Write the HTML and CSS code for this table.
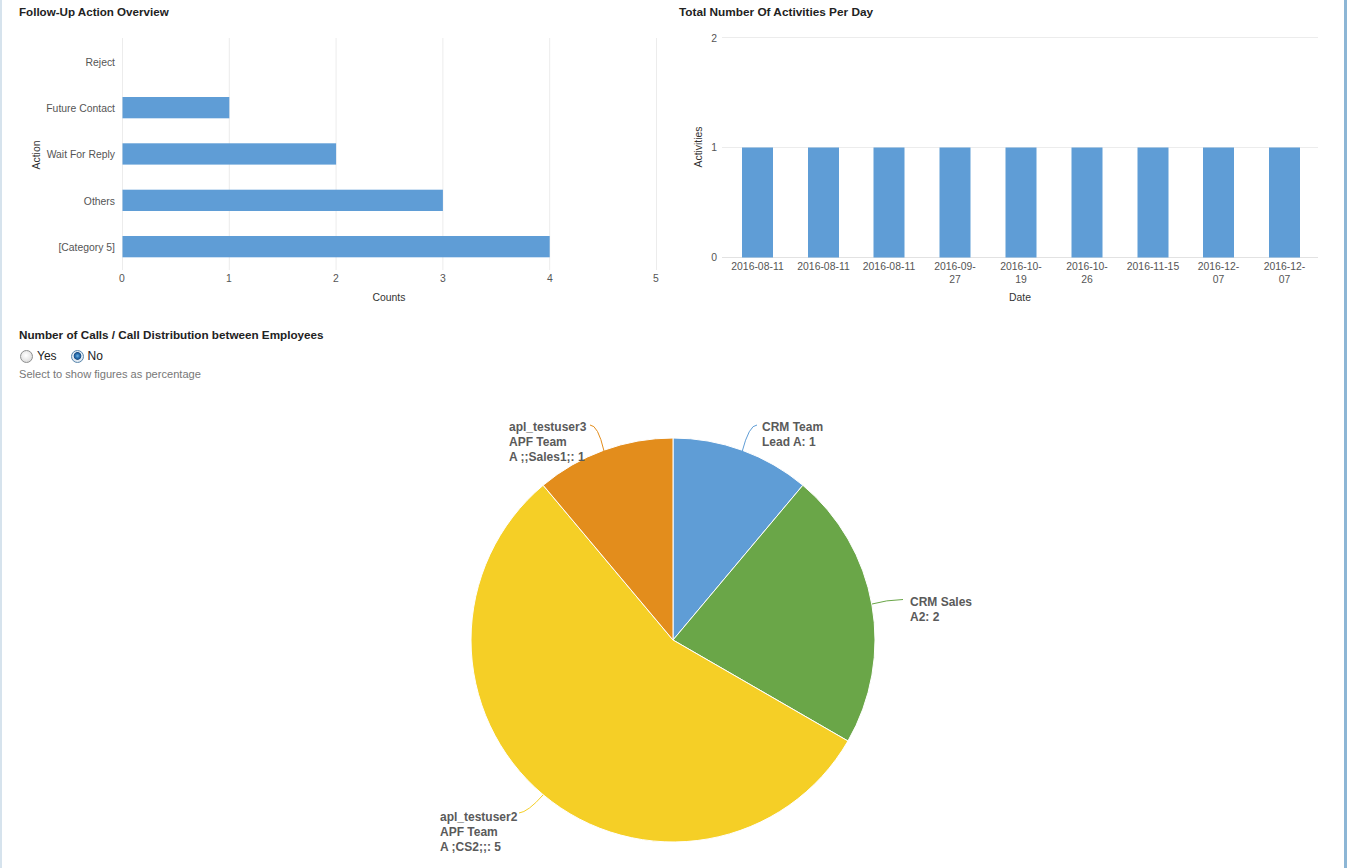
FILE: index.html
```html
<!DOCTYPE html>
<html lang="en">
<head>
<meta charset="utf-8">
<title>Follow-Up Dashboard</title>
<link rel="stylesheet" href="styles.css">
</head>
<body>
<div class="frame">
  <div class="top-row">
    <section class="panel panel-left">
      <h2 class="panel-title">Follow-Up Action Overview</h2>
      <svg class="chart" width="641" height="301" viewBox="0 0 641 301">
        <g transform="translate(-19,-19)">
          <g class="grid">
            <line x1="122.5" y1="38" x2="122.5" y2="270"/>
            <line x1="229.3" y1="38" x2="229.3" y2="270"/>
            <line x1="336.1" y1="38" x2="336.1" y2="270"/>
            <line x1="442.9" y1="38" x2="442.9" y2="270"/>
            <line x1="549.7" y1="38" x2="549.7" y2="270"/>
            <line x1="656.5" y1="38" x2="656.5" y2="270"/>
          </g>
          <g class="bars">
            <rect x="122.5" y="97" width="106.8" height="21.3"/>
            <rect x="122.5" y="143.3" width="213.6" height="21.3"/>
            <rect x="122.5" y="189.7" width="320.4" height="21.3"/>
            <rect x="122.5" y="236" width="427.2" height="21.3"/>
          </g>
          <g class="tick cat" text-anchor="end">
            <text x="115" y="66">Reject</text>
            <text x="115" y="112">Future Contact</text>
            <text x="115" y="158">Wait For Reply</text>
            <text x="115" y="205">Others</text>
            <text x="115" y="251">[Category 5]</text>
          </g>
          <g class="tick" text-anchor="middle">
            <text x="122" y="282">0</text>
            <text x="229" y="282">1</text>
            <text x="336" y="282">2</text>
            <text x="443" y="282">3</text>
            <text x="550" y="282">4</text>
            <text x="656" y="282">5</text>
          </g>
          <text class="axis-title" x="389" y="301" text-anchor="middle">Counts</text>
          <text class="axis-title" transform="translate(40,155) rotate(-90)" text-anchor="middle">Action</text>
        </g>
      </svg>
    </section>
    <section class="panel panel-right">
      <h2 class="panel-title panel-title-wide">Total Number Of Activities Per Day</h2>
      <svg class="chart" width="646" height="301" viewBox="0 0 646 301">
        <g transform="translate(-679,-19)">
          <g class="grid">
            <line x1="722" y1="37.5" x2="1318" y2="37.5"/>
            <line x1="722" y1="147.5" x2="1318" y2="147.5"/>
            <line class="base" x1="722" y1="257.5" x2="1318" y2="257.5"/>
          </g>
          <g class="bars">
            <rect x="742" y="147.5" width="31" height="110"/>
            <rect x="808" y="147.5" width="31" height="110"/>
            <rect x="873.5" y="147.5" width="31" height="110"/>
            <rect x="939.5" y="147.5" width="31" height="110"/>
            <rect x="1005.5" y="147.5" width="31" height="110"/>
            <rect x="1071.5" y="147.5" width="31" height="110"/>
            <rect x="1137.5" y="147.5" width="31" height="110"/>
            <rect x="1203" y="147.5" width="31" height="110"/>
            <rect x="1269" y="147.5" width="31" height="110"/>
          </g>
          <g class="tick" text-anchor="end">
            <text x="717" y="42">2</text>
            <text x="717" y="151">1</text>
            <text x="717" y="261">0</text>
          </g>
          <g class="tick" text-anchor="middle">
            <text x="757.5" y="270">2016-08-11</text>
            <text x="823.5" y="270">2016-08-11</text>
            <text x="889" y="270">2016-08-11</text>
            <text x="955" y="270">2016-09-</text>
            <text x="955" y="283">27</text>
            <text x="1021" y="270">2016-10-</text>
            <text x="1021" y="283">19</text>
            <text x="1087" y="270">2016-10-</text>
            <text x="1087" y="283">26</text>
            <text x="1153" y="270">2016-11-15</text>
            <text x="1218.5" y="270">2016-12-</text>
            <text x="1218.5" y="283">07</text>
            <text x="1284.5" y="270">2016-12-</text>
            <text x="1284.5" y="283">07</text>
          </g>
          <text class="axis-title" x="1020" y="301" text-anchor="middle">Date</text>
          <text class="axis-title" transform="translate(702,147) rotate(-90)" text-anchor="middle">Activities</text>
        </g>
      </svg>
    </section>
  </div>

  <section class="calls">
    <div class="calls-head">
      <h2 class="calls-title">Number of Calls / Call Distribution between Employees</h2>
      <div class="radio-row">
        <label class="radio-opt"><input type="radio" name="pct" class="radio"><span>Yes</span></label>
        <label class="radio-opt"><input type="radio" name="pct" class="radio" checked><span>No</span></label>
      </div>
      <p class="hint">Select to show figures as percentage</p>
    </div>
    <svg class="pie" width="1342" height="487" viewBox="0 0 1342 487">
      <g transform="translate(-2,-381)">
        <g class="slices">
          <path class="s-blue" d="M673,640 L673,438 A202,202 0 0 1 802.85,485.26 Z"/>
          <path class="s-green" d="M673,640 L802.85,485.26 A202,202 0 0 1 847.94,741 Z"/>
          <path class="s-yellow" d="M673,640 L847.94,741 A202,202 0 1 1 543.15,485.26 Z"/>
          <path class="s-orange" d="M673,640 L543.15,485.26 A202,202 0 0 1 673,438 Z"/>
        </g>
        <g class="leaders">
          <path class="l-blue" d="M757,425 Q749,425 742,452"/>
          <path class="l-green" d="M872,604 Q886,600 903,599.5"/>
          <path class="l-yellow" d="M519,813 Q528,812 543,795"/>
          <path class="l-orange" d="M590,425 Q598,425 604,451"/>
        </g>
        <g class="pie-label">
          <text x="762" y="431">CRM Team</text>
          <text x="762" y="446">Lead A: 1</text>
          <text x="910" y="606">CRM Sales</text>
          <text x="910" y="621">A2: 2</text>
          <text x="509" y="431">apl_testuser3</text>
          <text x="509" y="446">APF Team</text>
          <text x="509" y="461">A ;;Sales1;: 1</text>
          <text x="440" y="821">apl_testuser2</text>
          <text x="440" y="836">APF Team</text>
          <text x="440" y="851">A ;CS2;;: 5</text>
        </g>
      </g>
    </svg>
  </section>
</div>
</body>
</html>
```

FILE: styles.css
```css
html, body {
  margin: 0;
  padding: 0;
  background: #ffffff;
}

body {
  font-family: "Liberation Sans", Arial, sans-serif;
  color: #333;
}

.frame {
  box-sizing: border-box;
  width: 1347px;
  height: 868px;
  overflow: hidden;
  border-left: 2px solid #d6e3ed;
  border-right: 3px solid #8db6d5;
}

.top-row {
  display: grid;
  grid-template-columns: 658px 1fr;
  height: 320px;
}

.panel-left {
  padding-left: 17px;
}

.panel-right {
  padding-left: 19px;
}

.panel-title {
  margin: 5px 0 0;
  font-size: 11.6px;
  line-height: 14px;
  font-weight: bold;
  color: #222;
}

.panel-title-wide {
  font-size: 11.8px;
}

.chart {
  display: block;
  overflow: visible;
}

.grid line {
  stroke: #ececec;
  stroke-width: 1;
}

.grid line.base {
  stroke: #e2e2e2;
}

.bars rect {
  fill: #5f9dd6;
}

.tick text {
  font-family: "Liberation Sans", Arial, sans-serif;
  font-size: 10.4px;
  fill: #555;
}

.axis-title {
  font-family: "Liberation Sans", Arial, sans-serif;
  font-size: 10.4px;
  fill: #333;
}

.calls-head {
  padding-left: 17px;
  height: 61px;
}

.calls-title {
  margin: 0;
  padding-top: 8px;
  font-size: 11.7px;
  line-height: 14px;
  font-weight: bold;
  color: #222;
}

.radio-row {
  display: flex;
  align-items: center;
  margin-top: 6px;
  height: 16px;
  font-size: 12px;
  color: #222;
}

.radio-opt {
  display: flex;
  align-items: center;
  margin-right: 13px;
}

.radio {
  appearance: none;
  -webkit-appearance: none;
  box-sizing: border-box;
  width: 13px;
  height: 13px;
  margin: 0 4px 0 1px;
  border-radius: 50%;
  border: 1px solid #8e8f8f;
  background: radial-gradient(circle at 45% 40%, #ffffff 0, #eeeeee 40%, #cfcfcf 100%);
}

.radio:checked {
  border-color: #5a87ad;
  background: radial-gradient(circle at 50% 45%, #6fb3e4 0, #2b73b4 2px, #1b4f86 3.5px, #e6eef6 4.2px, #cfd9e3 100%);
}

.hint {
  margin: 3px 0 0;
  font-size: 11.1px;
  line-height: 14px;
  color: #777;
}

.pie {
  display: block;
}

.slices path {
  stroke: #ffffff;
  stroke-width: 1;
}

.s-blue { fill: #5f9dd6; }
.s-green { fill: #6aa648; }
.s-yellow { fill: #f5cf26; }
.s-orange { fill: #e38d1c; }

.leaders path {
  fill: none;
  stroke-width: 1;
}

.l-blue { stroke: #5f9dd6; }
.l-green { stroke: #6aa648; }
.l-yellow { stroke: #f5cf26; }
.l-orange { stroke: #e38d1c; }

.pie-label text {
  font-family: "Liberation Sans", Arial, sans-serif;
  font-size: 12px;
  font-weight: bold;
  fill: #5a5a5a;
}
```
